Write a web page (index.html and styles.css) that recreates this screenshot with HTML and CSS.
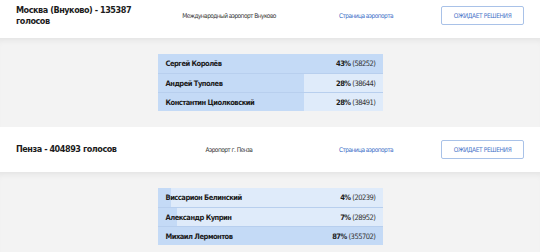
FILE: index.html
```html
<!DOCTYPE html>
<html lang="ru">
<head>
  <meta charset="UTF-8" />
  <title>Голосование</title>
  <link rel="stylesheet" href="styles.css">
</head>
<body>
  <div class="page">
    <div class="airport">
      <div class="title">Москва (Внуково) - 135387 голосов</div>
      <div class="name">Международный аэропорт Внуково</div>
      <a class="link" href="#">Страница аэропорта</a>
      <button class="status">Ожидает решения</button>
    </div>
    <div class="results">
      <div class="table">
        <div class="row" style="--w:100%"><span class="person">Сергей Королёв</span><span class="val"><b>43%</b> (58252)</span></div>
        <div class="row" style="--w:65.1%"><span class="person">Андрей Туполев</span><span class="val"><b>28%</b> (38644)</span></div>
        <div class="row" style="--w:65.1%"><span class="person">Константин Циолковский</span><span class="val"><b>28%</b> (38491)</span></div>
      </div>
    </div>

    <div class="airport">
      <div class="title">Пенза - 404893 голосов</div>
      <div class="name">Аэропорт г. Пенза</div>
      <a class="link" href="#">Страница аэропорта</a>
      <button class="status">Ожидает решения</button>
    </div>
    <div class="results">
      <div class="table">
        <div class="row" style="--w:5.7%"><span class="person">Виссарион Белинский</span><span class="val"><b>4%</b> (20239)</span></div>
        <div class="row" style="--w:8.6%"><span class="person">Александр Куприн</span><span class="val"><b>7%</b> (28952)</span></div>
        <div class="row" style="--w:100%"><span class="person">Михаил Лермонтов</span><span class="val"><b>87%</b> (355702)</span></div>
      </div>
    </div>
  </div>
</body>
</html>
```

FILE: styles.css
```css
* { box-sizing: border-box; }
body {
  margin: 0;
  background-color: #f3f3f3;
  font-family: "DejaVu Sans Condensed", "Liberation Sans", sans-serif;
  color: #1c1c1c;
  overflow: hidden;
}
.page { margin-top: -7px; }
.airport {
  height: 45px;
  padding: 0 16px;
  background-color: #fff;
  display: flex;
  align-items: center;
}
.title {
  width: 120px;
  font-size: 9px;
  font-weight: bold;
  line-height: 11px;
  letter-spacing: -0.45px;
}
.name {
  width: 186px;
  text-align: center;
  font-size: 6.5px;
  letter-spacing: -0.55px;
  color: #333;
}
.link {
  width: 88px;
  text-align: center;
  font-size: 6.5px;
  letter-spacing: -0.55px;
  color: #3c6fc8;
  text-decoration: none;
}
.status {
  margin-left: auto;
  width: 83px;
  height: 19px;
  padding: 0;
  border: 1px solid #a9c2e8;
  border-radius: 2px;
  background: #fff;
  color: #4874c8;
  font-family: inherit;
  font-size: 6.5px;
  letter-spacing: -0.35px;
  text-transform: uppercase;
}
.results {
  padding: 16px 0;
  background-color: #f3f3f3;
  box-shadow: inset 0 6px 6px -4px rgba(0, 0, 0, 0.07);
}
.table {
  width: 225px;
  margin: 0 auto;
}
.row {
  height: 19px;
  padding: 0 7px 0 8px;
  display: flex;
  justify-content: space-between;
  align-items: center;
  font-size: 7.5px;
  letter-spacing: -0.5px;
  background: linear-gradient(to right, #c4daf6 var(--w), #dfebfa var(--w));
  border-top: 1px solid #b8cfee;
}
.row:first-child { border-top: none; }
.person { font-weight: bold; }
.val { color: #333; }
.val b { color: #1c1c1c; }
```
